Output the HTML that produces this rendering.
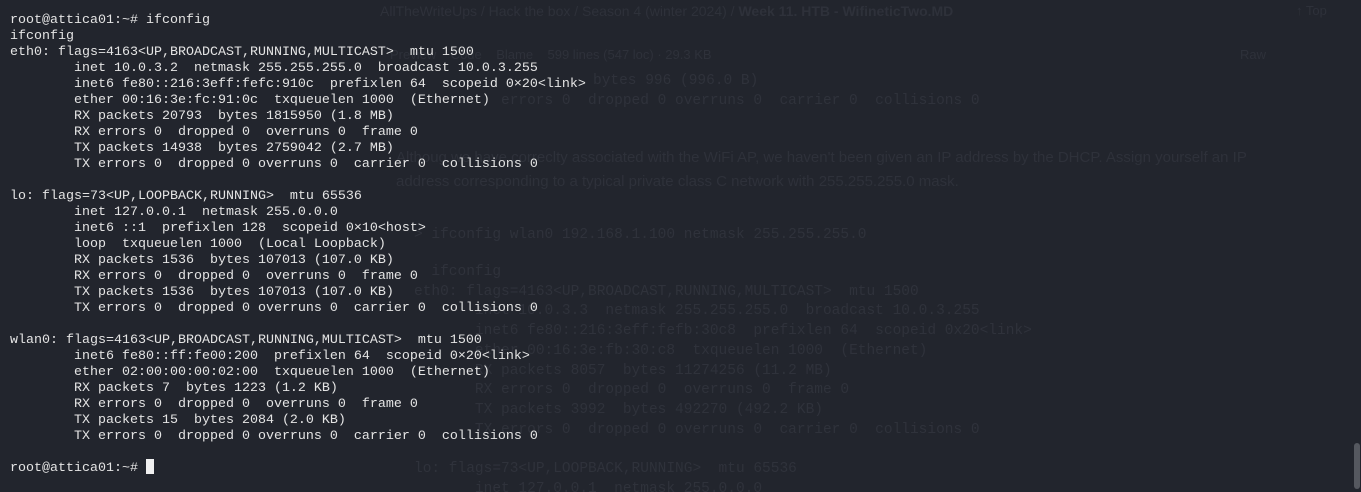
<!DOCTYPE html>
<html><head><meta charset="utf-8"><style>
html,body{margin:0;padding:0;width:1361px;height:492px;overflow:hidden;background:#22252d;}
#w{position:relative;width:1361px;height:492px;overflow:hidden;}
.bg{position:absolute;color:#2e313a;font-family:"Liberation Sans",sans-serif;white-space:pre;}
.bgm{position:absolute;color:#2f323b;font-family:"Liberation Mono",monospace;font-size:14.5px;line-height:19.7px;white-space:pre;}
pre{position:absolute;left:10px;top:13px;margin:0;font-family:"Liberation Mono","DejaVu Sans Mono",monospace;font-size:13.33px;line-height:16px;color:#e4e4e4;}
.cur{display:inline-block;width:8px;height:15px;background:#f0f0f0;vertical-align:-3px;}
.sb{position:absolute;left:1354px;top:443px;width:6px;height:46px;background:#55585f;border-radius:3px;}
</style></head><body><div id="w">
<div class="bg" style="left:380px;top:3px;font-size:14px;">AllTheWriteUps / Hack the box / Season 4 (winter 2024) / <b>Week 11. HTB - WifineticTwo.MD</b></div>
<div class="bg" style="left:1296px;top:3px;font-size:13px;">↑ Top</div>
<div class="bg" style="left:390px;top:47px;font-size:13px;">Preview    Code    Blame    599 lines (547 loc) · 29.3 KB</div>
<div class="bg" style="left:1240px;top:47px;font-size:13px;">Raw</div>
<div class="bgm" style="left:593px;top:72px;">bytes 996 (996.0 B)</div>
<div class="bgm" style="left:501px;top:92px;">errors 0  dropped 0 overruns 0  carrier 0  collisions 0</div>
<div class="bg" style="left:396px;top:146px;font-size:15px;line-height:24px;">Althoug we have correclty associated with the WiFi AP, we haven't been given an IP address by the DHCP. Assign yourself an IP
address corresponding to a typical private class C network with 255.255.255.0 mask.</div>
<div class="bgm" style="left:414px;top:226px;">&gt; ifconfig wlan0 192.168.1.100 netmask 255.255.255.0</div>
<div class="bgm" style="left:414px;top:263px;">  ifconfig
eth0: flags=4163&lt;UP,BROADCAST,RUNNING,MULTICAST&gt;  mtu 1500
       inet 10.0.3.3  netmask 255.255.255.0  broadcast 10.0.3.255
       inet6 fe80::216:3eff:fefb:30c8  prefixlen 64  scopeid 0x20&lt;link&gt;
       ether 00:16:3e:fb:30:c8  txqueuelen 1000  (Ethernet)
       RX packets 8057  bytes 11274256 (11.2 MB)
       RX errors 0  dropped 0  overruns 0  frame 0
       TX packets 3992  bytes 492270 (492.2 KB)
       TX errors 0  dropped 0 overruns 0  carrier 0  collisions 0

lo: flags=73&lt;UP,LOOPBACK,RUNNING&gt;  mtu 65536
       inet 127.0.0.1  netmask 255.0.0.0</div>
<pre>root@attica01:~# ifconfig
ifconfig
eth0: flags=4163&lt;UP,BROADCAST,RUNNING,MULTICAST&gt;  mtu 1500
        inet 10.0.3.2  netmask 255.255.255.0  broadcast 10.0.3.255
        inet6 fe80::216:3eff:fefc:910c  prefixlen 64  scopeid 0×20&lt;link&gt;
        ether 00:16:3e:fc:91:0c  txqueuelen 1000  (Ethernet)
        RX packets 20793  bytes 1815950 (1.8 MB)
        RX errors 0  dropped 0  overruns 0  frame 0
        TX packets 14938  bytes 2759042 (2.7 MB)
        TX errors 0  dropped 0 overruns 0  carrier 0  collisions 0

lo: flags=73&lt;UP,LOOPBACK,RUNNING&gt;  mtu 65536
        inet 127.0.0.1  netmask 255.0.0.0
        inet6 ::1  prefixlen 128  scopeid 0×10&lt;host&gt;
        loop  txqueuelen 1000  (Local Loopback)
        RX packets 1536  bytes 107013 (107.0 KB)
        RX errors 0  dropped 0  overruns 0  frame 0
        TX packets 1536  bytes 107013 (107.0 KB)
        TX errors 0  dropped 0 overruns 0  carrier 0  collisions 0

wlan0: flags=4163&lt;UP,BROADCAST,RUNNING,MULTICAST&gt;  mtu 1500
        inet6 fe80::ff:fe00:200  prefixlen 64  scopeid 0×20&lt;link&gt;
        ether 02:00:00:00:02:00  txqueuelen 1000  (Ethernet)
        RX packets 7  bytes 1223 (1.2 KB)
        RX errors 0  dropped 0  overruns 0  frame 0
        TX packets 15  bytes 2084 (2.0 KB)
        TX errors 0  dropped 0 overruns 0  carrier 0  collisions 0</pre>
<pre style="top:459px;">root@attica01:~# <span class="cur"></span></pre>
<div class="sb"></div>
</div></body></html>
